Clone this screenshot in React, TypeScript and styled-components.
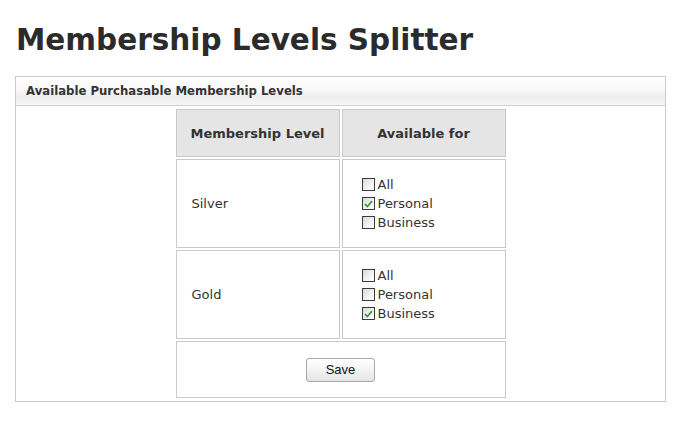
import React, { useState } from 'react'
import styled, { createGlobalStyle } from 'styled-components'

const GlobalStyle = createGlobalStyle`
  body {
    margin: 0;
    background: #fff;
    font-family: "DejaVu Sans", Verdana, sans-serif;
    color: #333;
  }
`

type Audience = 'All' | 'Personal' | 'Business'

const audiences: Audience[] = ['All', 'Personal', 'Business']

const initialLevels = [
  { name: 'Silver', allowed: ['Personal'] as Audience[] },
  { name: 'Gold', allowed: ['Business'] as Audience[] },
]

const App = () => {
  const [levels, setLevels] = useState(initialLevels)

  const toggle = (levelIndex: number, audience: Audience) => {
    setLevels(levels.map((level, i) => {
      if (i !== levelIndex) return level
      const has = level.allowed.includes(audience)
      return {
        ...level,
        allowed: has ? level.allowed.filter(a => a !== audience) : [...level.allowed, audience],
      }
    }))
  }

  return (
    <Page>
      <GlobalStyle />
      <Title>Membership Levels Splitter</Title>
      <Panel>
        <PanelHeader>Available Purchasable Membership Levels</PanelHeader>
        <LevelsTable>
          <thead>
            <tr>
              <HeadCell>Membership Level</HeadCell>
              <HeadCell>Available for</HeadCell>
            </tr>
          </thead>
          <tbody>
            {levels.map((level, index) => (
              <tr key={level.name}>
                <NameCell>{level.name}</NameCell>
                <OptionsCell>
                  {audiences.map(audience => {
                    const checked = level.allowed.includes(audience)
                    return (
                      <Option key={audience} onClick={() => toggle(index, audience)}>
                        <Box>
                          {checked && (
                            <svg width="9" height="8" viewBox="0 0 9 8">
                              <path d="M1 4.2 L3.4 6.5 L8 1.2" fill="none" stroke="#3f9a3a" strokeWidth="1.8" />
                            </svg>
                          )}
                        </Box>
                        {audience}
                      </Option>
                    )
                  })}
                </OptionsCell>
              </tr>
            ))}
            <tr>
              <SaveCell colSpan={2}>
                <SaveButton type="button">Save</SaveButton>
              </SaveCell>
            </tr>
          </tbody>
        </LevelsTable>
      </Panel>
    </Page>
  )
}

export default App

const Page = styled.div`
  padding: 25px 32px 0 15px;
`

const Title = styled.h1`
  margin: 0 0 21px 1px;
  font-size: 29.5px;
  font-weight: bold;
  line-height: 30px;
  color: #2b2b2b;
`

const Panel = styled.div`
  width: 649px;
  border: 1px solid #cbcbcb;
  padding-bottom: 1px;
`

const PanelHeader = styled.div`
  height: 28px;
  line-height: 29px;
  padding-left: 10px;
  font-size: 11.7px;
  font-weight: bold;
  color: #333;
  border-bottom: 1px solid #d0d0d0;
  background: linear-gradient(#ffffff, #f9f9f9 45%, #eeeeee 70%, #f6f6f6);
`

const LevelsTable = styled.table`
  border-collapse: separate;
  border-spacing: 2px;
  margin: 1px auto 0;
  font-size: 13px;
  color: #333;
`

const Cell = styled.td`
  border: 1px solid #c9c9c9;
  width: 162px;
  padding: 0;
`

const HeadCell = styled(Cell).attrs({ as: 'th' })`
  height: 46px;
  background: #e5e5e5;
  font-weight: bold;
  text-align: center;
`

const NameCell = styled(Cell)`
  height: 87px;
  padding-left: 15px;
  width: 147px;
  vertical-align: middle;
`

const OptionsCell = styled(Cell)`
  height: 87px;
  padding-left: 19px;
  width: 143px;
  vertical-align: middle;
`

const Option = styled.div`
  display: flex;
  align-items: center;
  height: 19px;
  cursor: pointer;
`

const Box = styled.span`
  box-sizing: border-box;
  width: 13px;
  height: 13px;
  margin-right: 3px;
  border: 1px solid #3a3a3a;
  background: linear-gradient(135deg, #d9d9d9, #f4f4f4 60%, #ffffff);
  display: flex;
  align-items: center;
  justify-content: center;
`

const SaveCell = styled(Cell)`
  height: 55px;
  text-align: center;
  vertical-align: middle;
`

const SaveButton = styled.button`
  width: 69px;
  height: 24px;
  font-family: "Liberation Sans", Arial, sans-serif;
  font-size: 13px;
  color: #111;
  border: 1px solid #a8a8a8;
  border-radius: 3px;
  background: linear-gradient(#ffffff, #f3f3f3 50%, #e4e4e4);
  cursor: pointer;
`
